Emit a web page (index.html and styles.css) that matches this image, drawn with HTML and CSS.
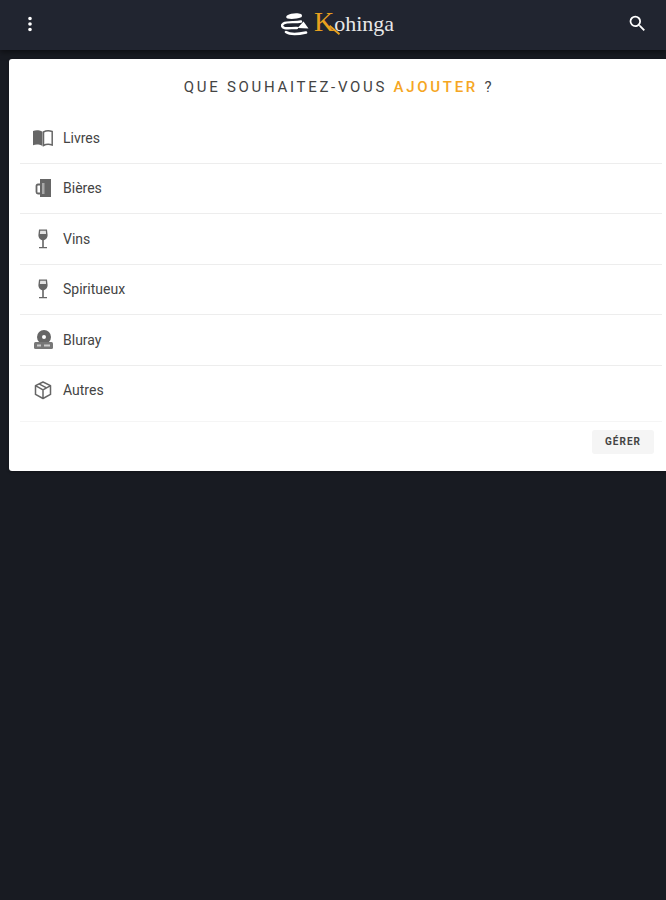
FILE: index.html
```html
<!DOCTYPE html>
<html lang="fr">
<head>
  <meta charset="UTF-8">
  <title>Kohinga</title>
  <link rel="stylesheet" href="styles.css">
</head>
<body>
  <header class="topbar">
    <button class="icon-btn" aria-label="Menu">
      <svg width="22" height="22" viewBox="0 0 24 24"><path fill="#fff" d="M12 8a2 2 0 1 0 0-4 2 2 0 0 0 0 4zm0 2a2 2 0 1 0 0 4 2 2 0 0 0 0-4zm0 6a2 2 0 1 0 0 4 2 2 0 0 0 0-4z"/></svg>
    </button>
    <div class="logo">
      <svg class="logo-mark" width="30" height="26" viewBox="0 0 30 26">
        <path fill="#fff" d="M7 4.500C11 1.800 18 1.600 21 3c1.300.6 1.300 2.400.3 3.300C17 8 11 8.200 7.500 7.600 6 7.200 5.800 5.400 7 4.500z"/>
        <path fill="none" stroke="#fff" stroke-width="2.400" stroke-linecap="round" d="M21 10.500C15 12 7.500 10 3.500 12.500c-2.500 1.700-1.500 4 1 4.500 4 .6 8-.2 12.500 0"/>
        <path fill="#fff" d="M17.500 17l6-6.500 5 7z"/>
        <path fill="none" stroke="#fff" stroke-width="2.600" stroke-linecap="round" d="M6 21c3 2 11 2.500 20 .5"/>
      </svg>
      <span class="logo-text"><span class="logo-k">K</span>ohinga</span>
    </div>
    <button class="icon-btn" aria-label="Rechercher">
      <svg width="21" height="21" viewBox="0 0 24 24"><path fill="#fff" d="M15.500 14h-.79l-.28-.27A6.470 6.470 0 0 0 16 9.500 6.500 6.500 0 1 0 9.500 16c1.610 0 3.090-.59 4.230-1.570l.27.28v.79l5 4.990L20.490 19l-4.990-5zm-6 0C7.010 14 5 11.990 5 9.500S7.010 5 9.500 5 14 7.010 14 9.500 11.990 14 9.500 14z"/></svg>
    </button>
  </header>

  <main class="card">
    <h1 class="card-title">QUE SOUHAITEZ-VOUS <span class="accent">AJOUTER</span> ?</h1>

    <ul class="type-list">
      <li class="type-row">
        <svg class="type-icon" width="22" height="22" viewBox="0 0 22 22">
          <path fill="#666" d="M1 4c3-1 6-1 9.500.8V19c-3.500-1.700-6.500-1.700-9.500-.7z"/>
          <path fill="none" stroke="#666" stroke-width="1.500" d="M11.500 5c2.800-1.500 5.600-1.500 8.700-.5v13.500c-3.100-1-5.900-1-8.700.5z"/>
        </svg>
        <span>Livres</span>
      </li>
      <li class="type-row">
        <svg class="type-icon" width="22" height="22" viewBox="0 0 22 22">
          <path fill="#666" d="M8 2h11v18H8z"/>
          <path fill="#a8a8a8" d="M10 6h2.500v11H10z"/>
          <path fill="none" stroke="#666" stroke-width="1.800" d="M8 7.500H6C5 7.500 4.500 8 4.500 9v6c0 1 .5 1.500 1.500 1.500h2"/>
        </svg>
        <span>Bières</span>
      </li>
      <li class="type-row">
        <svg class="type-icon" width="22" height="22" viewBox="0 0 22 22">
          <path fill="#666" d="M7 1.500h8l.6 5.500c.2 3-2.500 5-3.800 5.300V19H15v1.300H7V19h3.200v-6.700C8.900 12 6.200 10 6.400 7z"/>
          <path fill="#e2e2e2" d="M8.200 2.800h5.600l.3 3.200H7.900z"/>
        </svg>
        <span>Vins</span>
      </li>
      <li class="type-row">
        <svg class="type-icon" width="22" height="22" viewBox="0 0 22 22">
          <path fill="#666" d="M7 1.500h8l.6 5.500c.2 3-2.500 5-3.800 5.300V19H15v1.300H7V19h3.200v-6.700C8.900 12 6.200 10 6.400 7z"/>
          <path fill="#e2e2e2" d="M8.200 2.800h5.600l.3 3.200H7.900z"/>
        </svg>
        <span>Spiritueux</span>
      </li>
      <li class="type-row">
        <svg class="type-icon" width="22" height="22" viewBox="0 0 22 22">
          <circle cx="12" cy="8" r="7" fill="#666"/>
          <circle cx="12" cy="8" r="2" fill="#fff"/>
          <rect x="2" y="13" width="19" height="7" rx="1.500" fill="#777"/>
          <path fill="#ccc" d="M5 15.500h4v2H5zM12 15.500h6v2h-6z"/>
        </svg>
        <span>Bluray</span>
      </li>
      <li class="type-row type-row-last">
        <svg class="type-icon" width="22" height="22" viewBox="0 0 22 22">
          <path fill="none" stroke="#666" stroke-width="1.500" stroke-linejoin="round" d="M11 3l7.500 3.600v8.800L11 19.500l-7.500-4.100V6.600zM3.500 6.600L11 10.800l7.500-4.200M11 10.800v8.700M7 4.900l7.500 3.900"/>
        </svg>
        <span>Autres</span>
      </li>
    </ul>

    <div class="card-actions">
      <button class="manage-btn">GÉRER</button>
    </div>
  </main>
</body>
</html>
```

FILE: styles.css
```css
* {
  box-sizing: border-box;
}
html, body {
  height: 100%;
}
body {
  margin: 0;
  background-color: #181b22;
  font-family: Roboto, "Liberation Sans", sans-serif;
  overflow: hidden;
}
.topbar {
  height: 50px;
  padding: 0 18px 3px 19px;
  display: flex;
  align-items: center;
  justify-content: space-between;
  background-color: #212530;
  box-shadow: 0 2px 6px rgba(0, 0, 0, 0.5);
}
.icon-btn {
  padding: 0;
  border: none;
  background: none;
}
.icon-btn svg {
  display: block;
}
.logo {
  display: flex;
  align-items: center;
  gap: 4px;
  margin-left: 6px;
}
.logo-text {
  font-family: "Liberation Serif", serif;
  font-size: 22px;
  color: #e8e8e8;
}
.logo-k {
  position: relative;
  color: #e8a11e;
  font-size: 28px;
  line-height: 22px;
}
/* long tail of the K, runs under the o */
.logo-k::after {
  content: "";
  position: absolute;
  left: 14px;
  top: 23px;
  width: 13px;
  height: 2px;
  background-color: #e8a11e;
  transform: rotate(40deg);
}
.card {
  width: 660px;
  margin: 9px 0 0 9px;
  background-color: #fff;
  border-radius: 3px;
  box-shadow: 0 1px 3px rgba(0, 0, 0, 0.3);
}
.card-title {
  margin: 0;
  padding-top: 19px;
  height: 54px;
  text-align: center;
  font-size: 15px;
  line-height: 18px;
  font-weight: 400;
  letter-spacing: 2.700px;
  color: #444;
}
.accent {
  color: #f5a623;
  font-weight: 500;
}
.type-list {
  list-style: none;
  margin: 0 7px 0 11px;
  padding: 0;
}
.type-row {
  height: 50.500px;
  padding-left: 12px;
  display: flex;
  align-items: center;
  gap: 9px;
  font-size: 14px;
  color: #444;
  border-bottom: 1px solid #ededed;
}
.type-row-last {
  height: 56px;
  padding-bottom: 6px;
  border-bottom-color: #f5f5f5;
}
.card-actions {
  height: 49px;
  padding: 8px 15px 0 0;
  display: flex;
  justify-content: flex-end;
  align-items: flex-start;
}
.manage-btn {
  width: 62px;
  height: 24px;
  padding: 0;
  border: none;
  border-radius: 3px;
  background-color: #f5f5f5;
  color: #444;
  font-family: inherit;
  font-size: 10px;
  font-weight: 700;
  letter-spacing: 1px;
}
```
